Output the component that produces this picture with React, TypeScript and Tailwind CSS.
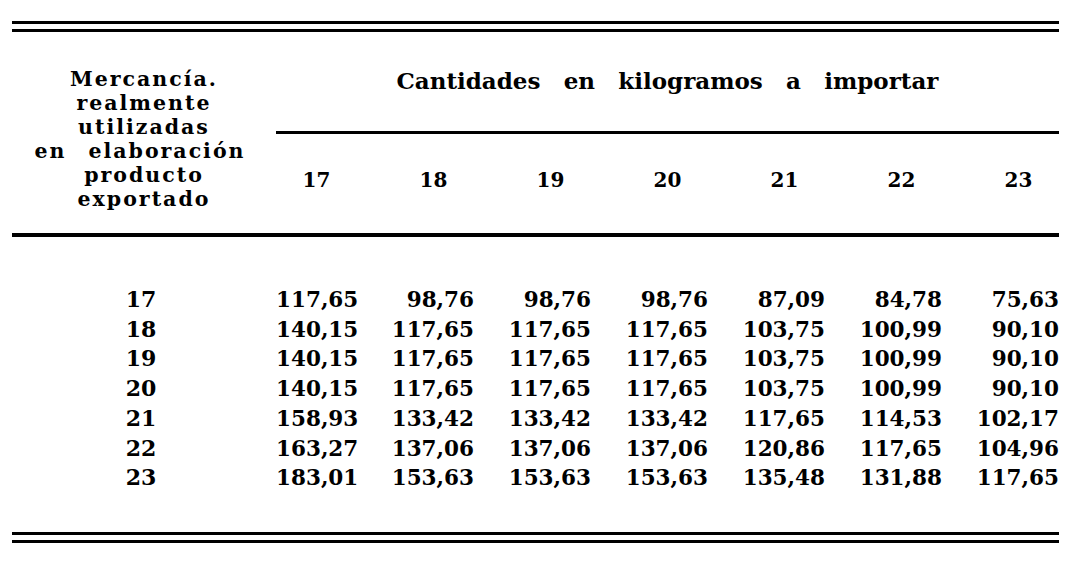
const columns = ['17', '18', '19', '20', '21', '22', '23'];

const rows: { label: string; values: string[] }[] = [
  { label: '17', values: ['117,65', '98,76', '98,76', '98,76', '87,09', '84,78', '75,63'] },
  { label: '18', values: ['140,15', '117,65', '117,65', '117,65', '103,75', '100,99', '90,10'] },
  { label: '19', values: ['140,15', '117,65', '117,65', '117,65', '103,75', '100,99', '90,10'] },
  { label: '20', values: ['140,15', '117,65', '117,65', '117,65', '103,75', '100,99', '90,10'] },
  { label: '21', values: ['158,93', '133,42', '133,42', '133,42', '117,65', '114,53', '102,17'] },
  { label: '22', values: ['163,27', '137,06', '137,06', '137,06', '120,86', '117,65', '104,96'] },
  { label: '23', values: ['183,01', '153,63', '153,63', '153,63', '135,48', '131,88', '117,65'] },
];

const headerLines = ['Mercancía.', 'realmente', 'utilizadas', null, 'producto', 'exportado'];

function Rule({ className = '' }: { className?: string }) {
  return <div className={`bg-black ${className}`} />;
}

export default function App() {
  return (
    <div className="min-h-screen bg-white pl-[12px] pt-[21px] font-['DejaVu_Serif','Liberation_Serif',serif] font-bold text-black">
      <div className="w-[1047px]">
        {/* top double rule */}
        <Rule className="h-[3px]" />
        <Rule className="mt-[5px] h-[3px]" />

        {/* header */}
        <div className="flex h-[201px]">
          <div className="w-[264px] pt-[35px] text-center text-[20.5px] leading-[24px] tracking-[2px]">
            {headerLines.map((line, i) =>
              line ? (
                <div key={i}>{line}</div>
              ) : (
                <div key={i} className="flex justify-center gap-[22px] pr-[8px]">
                  <span>en</span>
                  <span>elaboración</span>
                </div>
              ),
            )}
          </div>

          <div className="flex flex-1 flex-col">
            <div className="h-[99px] pt-[37px]">
              <div className="mx-auto flex w-[542px] justify-between text-[23px] leading-[24px]">
                <span>Cantidades</span>
                <span>en</span>
                <span>kilogramos</span>
                <span>a</span>
                <span>importar</span>
              </div>
            </div>
            <Rule className="h-[3px]" />
            <div className="grid flex-1 grid-cols-[81px_repeat(6,117px)] items-center pb-[7px] text-[20px]">
              {columns.map((c) => (
                <div key={c} className="flex justify-end">
                  <span className="w-[81px] text-center">{c}</span>
                </div>
              ))}
            </div>
          </div>
        </div>
        <Rule className="h-[4px]" />

        {/* body */}
        <div className="pb-[39px] pt-[48px]">
          {rows.map((row) => (
            <div key={row.label} className="flex leading-[29.7px]">
              <div className="w-[264px] pr-[6px] text-center text-[22px]">{row.label}</div>
              <div className="grid flex-1 grid-cols-[81px_repeat(6,117px)] text-right text-[21.5px]">
                {row.values.map((v, i) => (
                  <span key={i}>{v}</span>
                ))}
              </div>
            </div>
          ))}
        </div>

        {/* bottom double rule */}
        <Rule className="h-[3px]" />
        <Rule className="mt-[5px] h-[3px]" />
      </div>
    </div>
  );
}
